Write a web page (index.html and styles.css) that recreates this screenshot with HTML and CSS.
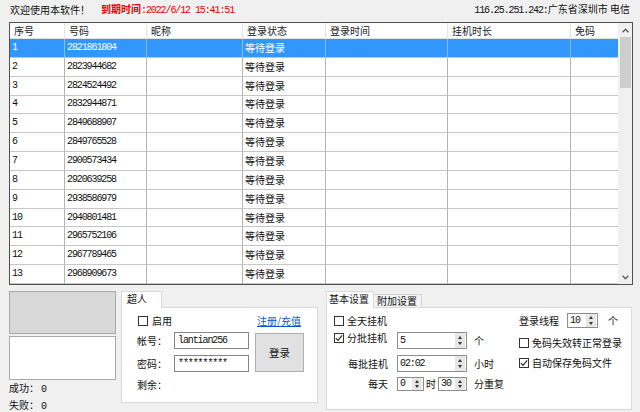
FILE: index.html
```html
<!DOCTYPE html>
<html lang="zh-CN">
<head>
<meta charset="utf-8">
<title>登录管理</title>
<link rel="stylesheet" href="styles.css">
</head>
<body>
<div class="topbar">
  <span class="welcome">欢迎使用本软件！</span>
  <span class="expire"><span class="expire-label">到期时间</span><span class="mono">:2022/6/12 15:41:51</span></span>
  <span class="ip"><span class="mono">116.25.251.242:</span>广东省深圳市 电信</span>
</div>

<div class="list">
  <div class="table">
    <div class="thead">
      <div class="th">序号</div><div class="th">号码</div><div class="th">昵称</div><div class="th">登录状态</div><div class="th">登录时间</div><div class="th">挂机时长</div><div class="th last">免码</div>
    </div>
    <div class="tbody">
      <div class="tr sel"><div class="td mono">1</div><div class="td mono">2821861804</div><div class="td"></div><div class="td">等待登录</div><div class="td"></div><div class="td"></div><div class="td last"></div></div>
      <div class="tr"><div class="td mono">2</div><div class="td mono">2823944682</div><div class="td"></div><div class="td">等待登录</div><div class="td"></div><div class="td"></div><div class="td last"></div></div>
      <div class="tr"><div class="td mono">3</div><div class="td mono">2824524492</div><div class="td"></div><div class="td">等待登录</div><div class="td"></div><div class="td"></div><div class="td last"></div></div>
      <div class="tr"><div class="td mono">4</div><div class="td mono">2832944871</div><div class="td"></div><div class="td">等待登录</div><div class="td"></div><div class="td"></div><div class="td last"></div></div>
      <div class="tr"><div class="td mono">5</div><div class="td mono">2849688907</div><div class="td"></div><div class="td">等待登录</div><div class="td"></div><div class="td"></div><div class="td last"></div></div>
      <div class="tr"><div class="td mono">6</div><div class="td mono">2849765528</div><div class="td"></div><div class="td">等待登录</div><div class="td"></div><div class="td"></div><div class="td last"></div></div>
      <div class="tr"><div class="td mono">7</div><div class="td mono">2900573434</div><div class="td"></div><div class="td">等待登录</div><div class="td"></div><div class="td"></div><div class="td last"></div></div>
      <div class="tr"><div class="td mono">8</div><div class="td mono">2920639258</div><div class="td"></div><div class="td">等待登录</div><div class="td"></div><div class="td"></div><div class="td last"></div></div>
      <div class="tr"><div class="td mono">9</div><div class="td mono">2938586979</div><div class="td"></div><div class="td">等待登录</div><div class="td"></div><div class="td"></div><div class="td last"></div></div>
      <div class="tr"><div class="td mono">10</div><div class="td mono">2940801481</div><div class="td"></div><div class="td">等待登录</div><div class="td"></div><div class="td"></div><div class="td last"></div></div>
      <div class="tr"><div class="td mono">11</div><div class="td mono">2965752106</div><div class="td"></div><div class="td">等待登录</div><div class="td"></div><div class="td"></div><div class="td last"></div></div>
      <div class="tr"><div class="td mono">12</div><div class="td mono">2967789465</div><div class="td"></div><div class="td">等待登录</div><div class="td"></div><div class="td"></div><div class="td last"></div></div>
      <div class="tr"><div class="td mono">13</div><div class="td mono">2968909673</div><div class="td"></div><div class="td">等待登录</div><div class="td"></div><div class="td"></div><div class="td last"></div></div>
    </div>
  </div>
  <div class="vscroll">
    <div class="sb-btn"><svg width="7" height="5" viewBox="0 0 7 5"><path d="M0.6 4.2 L3.5 1.2 L6.4 4.2" fill="none" stroke="#5a5a5a" stroke-width="1.3"/></svg></div>
    <div class="sb-track"><div class="sb-thumb"></div></div>
    <div class="sb-btn"><svg width="7" height="5" viewBox="0 0 7 5"><path d="M0.6 0.8 L3.5 3.8 L6.4 0.8" fill="none" stroke="#5a5a5a" stroke-width="1.3"/></svg></div>
  </div>
</div>

<div class="bottom">
  <div class="left">
    <div class="graybox"></div>
    <div class="whitebox"></div>
    <div class="stats">成功：<span class="mono">0</span></div>
    <div class="stats">失败：<span class="mono">0</span></div>
  </div>

  <div class="mid">
    <div class="tabs"><div class="tab active mid-tab">超人</div></div>
    <div class="panel mid-panel">
      <div class="mid-row1">
        <label class="check"><span class="box"></span>启用</label>
        <span class="link">注册/充值</span>
      </div>
      <div class="login-grid">
        <span class="lbl">帐号：</span>
        <div class="input mono">lantian256</div>
        <div class="btn">登录</div>
        <span class="lbl">密码：</span>
        <div class="input mono">**********</div>
      </div>
      <div class="remain">剩余：</div>
    </div>
  </div>

  <div class="right">
    <div class="tabs">
      <div class="tab active set-tab">基本设置</div>
      <div class="tab inactive">附加设置</div>
    </div>
    <div class="panel set-panel">
      <div class="group-l">
        <div class="frow rA">
          <label class="check"><span class="box"></span>全天挂机</label>
        </div>
        <div class="frow rB">
          <label class="check"><span class="box on"><svg width="8" height="8" viewBox="0 0 8 8"><path d="M0.8 4.2 L3 6.4 L7.2 1.4" fill="none" stroke="#222" stroke-width="1.1"/></svg></span>分批挂机</label>
          <div class="spin w70 h17"><span class="v mono">5</span><span class="b"><i class="up"></i><i class="dn"></i></span></div>
          <span class="unit">个</span>
        </div>
        <div class="frow rC">
          <span class="rl">每批挂机</span>
          <div class="spin w70 h17"><span class="v mono">02:02</span><span class="b"><i class="up"></i><i class="dn"></i></span></div>
          <span class="unit">小时</span>
        </div>
        <div class="frow rD">
          <span class="rl">每天</span>
          <div class="pair">
            <div class="spin w27 h14"><span class="v mono">0</span><span class="b"><i class="up"></i><i class="dn"></i></span></div>
            <span class="hr">时</span>
            <div class="spin w29 h14"><span class="v mono">30</span><span class="b"><i class="up"></i><i class="dn"></i></span></div>
          </div>
          <span class="unit">分重复</span>
        </div>
      </div>
      <div class="group-r">
        <div class="thread">
          <span>登录线程</span>
          <div class="spin w31 h15"><span class="v mono">10</span><span class="b"><i class="up"></i><i class="dn"></i></span></div>
          <span class="tunit">个</span>
        </div>
        <label class="check r2"><span class="box"></span>免码失效转正常登录</label>
        <label class="check r3"><span class="box on"><svg width="8" height="8" viewBox="0 0 8 8"><path d="M0.8 4.2 L3 6.4 L7.2 1.4" fill="none" stroke="#222" stroke-width="1.1"/></svg></span>自动保存免码文件</label>
      </div>
    </div>
  </div>
</div>
</body>
</html>
```

FILE: styles.css
```css
* { box-sizing: border-box; }

body {
  margin: 0;
  width: 640px;
  height: 412px;
  overflow: hidden;
  background: #f0f0f0;
  color: #111;
  font-family: "Noto Sans CJK SC", "Noto Sans", sans-serif;
  font-size: 10px;
  line-height: 14px;
}

.mono {
  font-family: "Liberation Mono", "DejaVu Sans Mono", monospace;
  letter-spacing: -1.1px;
}

/* top bar */
.topbar {
  display: flex;
  align-items: center;
  height: 22px;
  padding: 0 10px 2px 10px;
}
.expire {
  margin-left: 11px;
  color: #e60000;
}
.expire-label { font-weight: bold; }
.ip { margin-left: auto; }

/* list view */
.list {
  display: flex;
  margin-left: 9px;
  width: 624px;
  height: 263px;
  border: 1px solid #505050;
  background: #fff;
}
.table {
  width: 608px;
  display: flex;
  flex-direction: column;
}
.thead, .tr {
  display: grid;
  grid-template-columns: 55px 82px 96px 83px 122px 123px 47px;
}
.thead {
  height: 16px;
  border-bottom: 1px solid #e2e2e2;
}
.th {
  padding-left: 4px;
  line-height: 15px;
  border-right: 1px solid #e5e5e5;
  color: #222;
}
.tbody {
  height: 245px;
  display: grid;
  grid-template-rows: repeat(13, 1fr);
}
.td {
  display: flex;
  align-items: center;
  padding-left: 2px;
  border-right: 1px solid #b4b4b4;
  border-bottom: 1px solid #c6c6c6;
  white-space: nowrap;
  overflow: hidden;
}
.th.last, .td.last { border-right: none; }
.tr.sel { background: #3297fd; color: #fff; }
.tr.sel .td { border-right-color: #86bdf5; }

.vscroll {
  width: 14px;
  background: #f0f0f0;
  display: flex;
  flex-direction: column;
}
.sb-btn {
  height: 14px;
  display: flex;
  align-items: center;
  justify-content: center;
}
.sb-track { flex: 1; }
.sb-thumb {
  height: 51px;
  margin: 0 1px 0 2px;
  background: #cdcdcd;
}

/* bottom area */
.bottom {
  display: flex;
  align-items: flex-start;
  margin-top: 6px;
}
.left {
  margin-left: 9px;
  width: 107px;
}
.graybox {
  height: 43px;
  border: 1px solid #a9a9a9;
  background: #d8d8d8;
}
.whitebox {
  height: 44px;
  margin-top: 2px;
  border: 1px solid #a9a9a9;
  background: #fff;
}
.stats { line-height: 15px; }
.stats .mono { margin-left: 2px; }

.tabs {
  display: flex;
  align-items: flex-end;
  height: 16px;
}
.tab {
  border: 1px solid #d9d9d9;
  border-bottom: none;
  line-height: 14px;
}
.tab.active {
  height: 16px;
  background: #fff;
  position: relative;
  top: 1px;
  height: 17px;
}
.tab.inactive {
  height: 13px;
  width: 48px;
  padding-left: 3px;
  line-height: 12px;
  background: #f4f4f4;
  border-color: #d3d3d3;
  border-left: none;
}
.mid-tab { width: 41px; padding-left: 5px; }
.set-tab { width: 48px; padding-left: 2px; }

.panel {
  background: #fff;
  border: 1px solid #d9d9d9;
}

.mid {
  margin-left: 5px;
  width: 197px;
}
.mid-panel {
  height: 96px;
  padding: 6px 0 0 15px;
}
.mid-row1 {
  display: flex;
  align-items: center;
  justify-content: space-between;
  width: 164px;
  height: 14px;
  padding-left: 1px;
}
.mid-row1 .check { gap: 4px; }
.link {
  color: #0b57c9;
  text-decoration: underline;
}
.login-grid {
  display: grid;
  grid-template-columns: 37px 81px 49px;
  grid-template-rows: 17px 17px;
  row-gap: 6px;
  margin-top: 4px;
  align-items: center;
}
.input {
  width: 75px;
  height: 17px;
  border: 1px solid #858585;
  background: #fff;
  padding-left: 3px;
  line-height: 15px;
  font-size: 10px;
}
.btn {
  grid-column: 3;
  grid-row: 1 / span 2;
  align-self: stretch;
  margin-top: 1px;
  background: #e1e1e1;
  border: 1px solid #adadad;
  display: flex;
  align-items: center;
  justify-content: center;
  font-size: 10.5px;
}
.remain { margin-top: 6px; }

.check {
  display: flex;
  align-items: center;
  gap: 3px;
  white-space: nowrap;
}
.box {
  width: 10px;
  height: 10px;
  border: 1px solid #333;
  background: #fff;
  display: flex;
  align-items: center;
  justify-content: center;
  flex: none;
}

/* settings panel */
.right {
  margin-left: 8px;
  width: 306px;
}
.set-panel {
  height: 103px;
  display: flex;
  align-items: flex-start;
  padding-left: 7px;
}
.group-l {
  width: 185px;
  padding-top: 6px;
}
.frow {
  display: grid;
  grid-template-columns: 63px 70px auto;
  align-items: center;
}
.rA { height: 14px; }
.rB { height: 17px; margin-top: 4px; }
.rC { height: 17px; margin-top: 6px; }
.rD { height: 14px; margin-top: 5px; }
.rB .check { align-self: start; margin-top: -1px; }
.rl {
  text-align: right;
  padding-right: 9px;
}
.unit { padding-left: 7px; }
.pair {
  display: flex;
  align-items: center;
}
.hr { margin: 0 2px; }

.spin {
  display: flex;
  align-items: stretch;
  border: 1px solid #8c8c8c;
  background: #fff;
}
.spin .v {
  flex: 1;
  padding-left: 2px;
  display: flex;
  align-items: center;
  font-size: 10px;
}
.spin .b {
  width: 10px;
  margin: 0 1px 0 0;
  background: #e6e6e6;
  display: flex;
  flex-direction: column;
  align-items: center;
  justify-content: space-evenly;
}
.spin .up, .spin .dn {
  width: 0;
  height: 0;
  border-left: 2.5px solid transparent;
  border-right: 2.5px solid transparent;
}
.spin .up { border-bottom: 3px solid #333; }
.spin .dn { border-top: 3px solid #333; }
.w70 { width: 70px; }
.w27 { width: 27px; }
.w29 { width: 29px; }
.w31 { width: 31px; }
.h17 { height: 17px; }
.h14 { height: 14px; }
.h15 { height: 15px; }

.group-r {
  margin-left: 0;
  padding-top: 5px;
}
.thread {
  display: flex;
  align-items: center;
  height: 15px;
}
.thread .spin { margin-left: 8px; }
.tunit { margin-left: 10px; }
.r2 { margin-top: 8px; }
.r3 { margin-top: 6px; }
```
